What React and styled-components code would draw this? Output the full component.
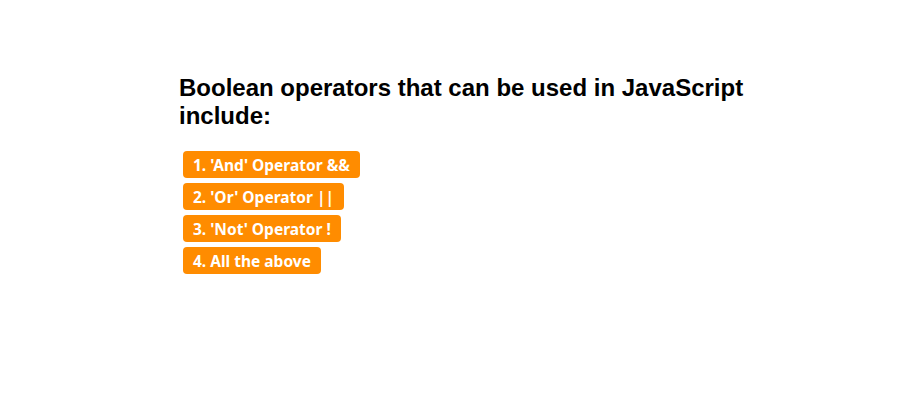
import React from 'react';
import styled, { createGlobalStyle } from 'styled-components';

const GlobalStyle = createGlobalStyle`
    body {
        margin: 0;
        background: #ffffff;
    }
`

const options = [
    "1. 'And' Operator &&",
    "2. 'Or' Operator ||",
    "3. 'Not' Operator !",
    '4. All the above',
]

function App() {
    return (
        <Page>
            <GlobalStyle />
            <Quiz>
                <Question>Boolean operators that can be used in JavaScript include:</Question>
                <Options>
                    {options.map((text) => (
                        <Option key={text}>{text}</Option>
                    ))}
                </Options>
            </Quiz>
        </Page>
    )
}

const Page = styled.div`
    display: flex;
    justify-content: center;
    padding-top: 74px;
    min-height: 100vh;
    box-sizing: border-box;
`
const Quiz = styled.div`
    width: 600px;
    margin-left: 36px;
`
const Question = styled.h2`
    margin: 0;
    font-family: "Liberation Sans", Arial, sans-serif;
    font-size: 24px;
    font-weight: bold;
    line-height: 28px;
    color: #000;
`
const Options = styled.div`
    display: flex;
    flex-direction: column;
    align-items: flex-start;
    gap: 5px;
    margin-top: 21px;
    padding-left: 4px;
`
const Option = styled.button`
    font-family: "Comic Sans MS", "Noto Sans", sans-serif;
    font-size: 15.5px;
    font-weight: bold;
    color: #fff;
    background: #ff8c00;
    border: none;
    border-radius: 4px;
    height: 27px;
    padding: 0 10px;
    cursor: pointer;
`

export default App
